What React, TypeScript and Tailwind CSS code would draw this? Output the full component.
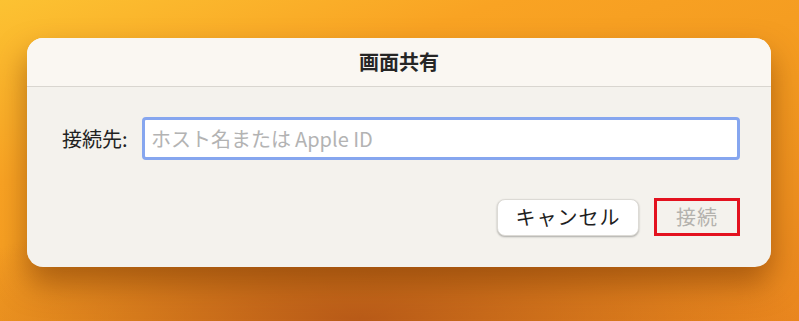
const App = () => {
  return (
    <div
      className="w-[799px] h-[321px] overflow-hidden pt-[38px] pl-[27px]"
      style={{
        background:
          "radial-gradient(ellipse 55% 40% at 45% 100%, #b85a18 0%, rgba(184,90,24,0) 100%), linear-gradient(160deg, #fcc232 0%, #f9a323 30%, #f39a20 60%, #e9861e 100%)",
        fontFamily: '"Noto Sans CJK JP", "Noto Sans", sans-serif',
      }}
    >
      <div className="w-[744px] h-[229px] rounded-[16px] bg-[#f4f2ed] overflow-hidden shadow-[0_16px_30px_rgba(110,45,0,0.5)] flex flex-col">
        <div className="h-[49px] shrink-0 bg-[#faf7f2] border-b border-[#d9d6d0] flex items-center justify-center">
          <span className="text-[20px] font-bold text-[#262626]">画面共有</span>
        </div>
        <div className="flex items-center pt-[30px] pl-[35px] pr-[31px]">
          <span className="text-[20px] text-[#222] w-[80px]">接続先:</span>
          <div className="flex-1 h-[43px] rounded-[4px] border-[3px] border-[#86a6ef] bg-white flex items-center pl-[6px]">
            <span className="text-[20px] text-[#b3b3b3]">
              ホスト名または<span className="ml-[4px]">Apple ID</span>
            </span>
          </div>
        </div>
        <div className="flex justify-end items-center gap-[15px] pt-[38px] pr-[31px]">
          <div className="w-[142px] h-[37px] rounded-[8px] bg-white shadow-[0_1px_2px_rgba(0,0,0,0.3)] border border-[#dcdad5] flex items-center justify-center">
            <span className="text-[20px] text-[#1e1e1e] tracking-[1px]">キャンセル</span>
          </div>
          <div className="w-[86px] h-[38px] border-[3px] border-[#e3121f] flex items-center justify-center">
            <span className="text-[20px] text-[#b4b2ae] tracking-[1px]">接続</span>
          </div>
        </div>
      </div>
    </div>
  );
};

export default App;
